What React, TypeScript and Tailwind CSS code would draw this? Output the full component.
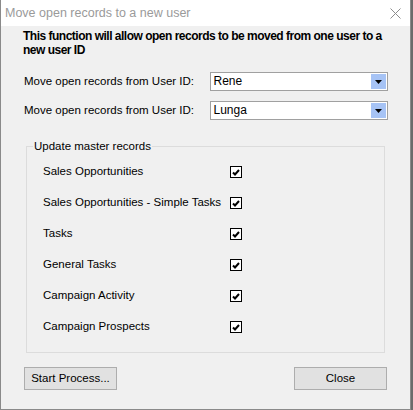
import React from 'react';

const items = [
  'Sales Opportunities',
  'Sales Opportunities - Simple Tasks',
  'Tasks',
  'General Tasks',
  'Campaign Activity',
  'Campaign Prospects',
];

function Combo({ value }: { value: string }) {
  return (
    <div className="flex h-[19px] w-[178px] items-stretch border border-[#a0a0a0] bg-white">
      <span className="flex-1 pl-[2px] text-[12px] leading-[17px] text-black">{value}</span>
      <div className="my-[1px] mr-[1px] flex w-[15px] items-center justify-center bg-[#a6c3f5]">
        <svg width="7" height="4" viewBox="0 0 7 4">
          <path d="M0 0h7L3.5 4z" fill="#000" />
        </svg>
      </div>
    </div>
  );
}

function Check() {
  return (
    <div className="flex h-[12px] w-[12px] items-center justify-center border border-black bg-white">
      <svg width="8" height="7" viewBox="0 0 8 7">
        <path d="M1 3.5l2 2L7 1" stroke="#000" strokeWidth="2" fill="none" />
      </svg>
    </div>
  );
}

export default function App() {
  return (
    <div className="h-[410px] w-[413px] bg-[#6b6b6b]">
      <div
        className="flex h-[410px] w-[411px] flex-col border-x border-b border-[#8a8a8a] bg-[#f0f0f0] text-[11.5px] text-black"
        style={{ fontFamily: '"Liberation Sans", Arial, sans-serif' }}
      >
        {/* Title bar */}
        <div className="flex h-[26px] items-center justify-between bg-white pl-[4px] pr-[9px]">
          <span className="text-[12.5px] text-[#9a9a9a]">Move open records to a new user</span>
          <svg width="11" height="11" viewBox="0 0 11 11">
            <path d="M0.5 0.5l10 10M10.5 0.5l-10 10" stroke="#8c8c8c" strokeWidth="1" />
          </svg>
        </div>

        <div className="flex flex-1 flex-col px-[22px] pt-[3px]">
          <p className="w-[366px] text-[12px] font-bold leading-[14px] tracking-[-0.5px]">
            This function will allow open records to be moved from one user to a new user ID
          </p>

          <div className="mt-[15px] flex flex-col gap-[10px]">
            <div className="flex items-center">
              <span className="w-[188px] pl-[1px]">Move open records from User ID:</span>
              <Combo value="Rene" />
            </div>
            <div className="flex items-center">
              <span className="w-[188px] pl-[1px]">Move open records from User ID:</span>
              <Combo value="Lunga" />
            </div>
          </div>

          {/* Group box */}
          <div className="relative mx-[3px] mt-[26px] h-[207px] border border-[#dcdcdc]">
            <span className="absolute left-[6px] top-[-8px] bg-[#f0f0f0] px-[1px] leading-[14px]">
              Update master records
            </span>
            <div className="flex flex-col gap-[17px] pl-[16px] pt-[18px]">
              {items.map((t) => (
                <div key={t} className="flex h-[14px] items-center">
                  <span className="w-[187px]">{t}</span>
                  <Check />
                </div>
              ))}
            </div>
          </div>

          <div className="mt-[14px] flex justify-between px-[1px]">
            <button className="h-[23px] w-[93px] border border-[#adadad] bg-[#e1e1e1]">Start Process...</button>
            <button className="h-[23px] w-[93px] border border-[#adadad] bg-[#e1e1e1]">Close</button>
          </div>
        </div>
      </div>
    </div>
  );
}
